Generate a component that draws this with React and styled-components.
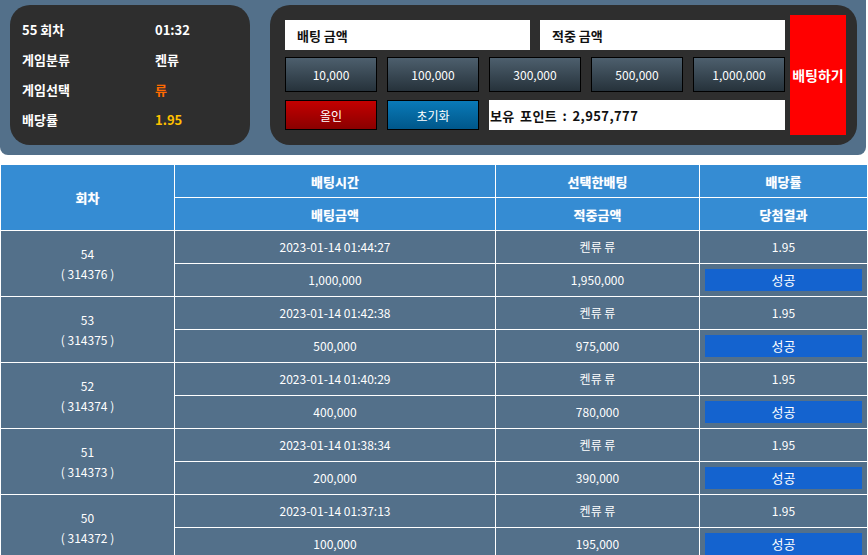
import React from 'react';
import styled, { createGlobalStyle } from 'styled-components';

const GlobalStyle = createGlobalStyle`
  html, body {
    margin: 0;
    padding: 0;
    background: #ffffff;
    overflow: hidden;
  }
  body {
    font-family: "Noto Sans CJK KR", "Noto Sans", sans-serif;
  }
`;

const TopBar = styled.div`
  width: 866px;
  height: 155px;
  box-sizing: border-box;
  background: #53708a;
  border-radius: 0 0 8px 8px;
  padding: 5px 9px 0 10px;
  display: flex;
  gap: 20px;
`;

const InfoPanel = styled.div`
  width: 240px;
  height: 140px;
  box-sizing: border-box;
  background: #2e2e2e;
  border-radius: 20px;
  padding: 9px 0 0 12px;
  display: grid;
  grid-template-columns: 133px 1fr;
  grid-auto-rows: 30px;
  align-items: center;
`;

const InfoText = styled.span`
  color: ${p => p.$color || '#ffffff'};
  font-size: 13px;
  font-weight: 700;
  line-height: 1;
`;

const BetPanel = styled.div`
  flex: 1;
  height: 140px;
  box-sizing: border-box;
  background: #2e2e2e;
  border-radius: 20px;
  padding: 10px 11px 10px 15px;
  display: flex;
  gap: 5px;
`;

const BetGrid = styled.div`
  width: 500px;
  padding-top: 5px;
  display: flex;
  flex-direction: column;
`;

const FieldRow = styled.div`
  display: flex;
  gap: 10px;
  margin-top: ${p => p.$top || 0}px;
`;

const AmountField = styled.div`
  flex: 1;
  height: 30px;
  background: #ffffff;
  display: flex;
  align-items: center;
  padding-left: ${p => (p.$tight ? 1 : 12)}px;
  color: #111111;
  font-size: 13px;
  font-weight: 700;
  letter-spacing: ${p => (p.$tight ? 0.4 : 0)}px;
  word-spacing: ${p => (p.$tight ? 2 : 0)}px;
  white-space: nowrap;
`;

const tones = {
  chip: ['#4d5f6d', '#26323b'],
  red: ['#c40000', '#8a0000'],
  blue: ['#0a7ab8', '#00578a'],
};

const ChipButton = styled.button`
  width: 92px;
  height: ${p => p.$h || 35}px;
  flex: none;
  box-sizing: border-box;
  border: 1px solid #000000;
  background: linear-gradient(${p => tones[p.$tone][0]}, ${p => tones[p.$tone][1]});
  color: #ffffff;
  font-family: inherit;
  font-size: 12px;
  font-weight: 400;
  padding: 0;
  cursor: pointer;
`;

const BetButton = styled.button`
  width: 56px;
  height: 120px;
  border: none;
  background: #ff0000;
  color: #ffffff;
  font-family: inherit;
  font-size: 14px;
  font-weight: 700;
  padding: 0;
  white-space: nowrap;
  cursor: pointer;
`;

const HistoryTable = styled.table`
  margin-top: 9px;
  width: 868px;
  border-collapse: collapse;
  table-layout: fixed;
  color: #ffffff;
`;

const Th = styled.th`
  background: #358cd3;
  border: 1px solid #ffffff;
  height: 32px;
  padding: 0;
  font-size: 13px;
  font-weight: 700;
  text-shadow: 0 0 1px rgba(255, 255, 255, 0.6);
`;

const Td = styled.td`
  background: #53708a;
  border: 1px solid #ffffff;
  height: 32px;
  padding: 0;
  text-align: center;
  font-size: 12px;
  font-weight: 400;
  line-height: 20px;
`;

const ResultBadge = styled.div`
  margin: 0 5px;
  height: 22px;
  background: #1463cf;
  display: flex;
  align-items: center;
  justify-content: center;
  font-size: 13px;
`;

const chips = ['10,000', '100,000', '300,000', '500,000', '1,000,000'];

const history = [
  { round: 54, id: 314376, time: '01:44:27', bet: '1,000,000', win: '1,950,000' },
  { round: 53, id: 314375, time: '01:42:38', bet: '500,000', win: '975,000' },
  { round: 52, id: 314374, time: '01:40:29', bet: '400,000', win: '780,000' },
  { round: 51, id: 314373, time: '01:38:34', bet: '200,000', win: '390,000' },
  { round: 50, id: 314372, time: '01:37:13', bet: '100,000', win: '195,000' },
];

export default function App() {
  return (
    <>
      <GlobalStyle />
      <TopBar>
        <InfoPanel>
          <InfoText>55 회차</InfoText>
          <InfoText>01:32</InfoText>
          <InfoText>게임분류</InfoText>
          <InfoText>켄류</InfoText>
          <InfoText>게임선택</InfoText>
          <InfoText $color="#ff6a00">류</InfoText>
          <InfoText>배당률</InfoText>
          <InfoText $color="#ffc000">1.95</InfoText>
        </InfoPanel>

        <BetPanel>
          <BetGrid>
            <FieldRow>
              <AmountField>배팅 금액</AmountField>
              <AmountField>적중 금액</AmountField>
            </FieldRow>
            <FieldRow $top={7}>
              {chips.map(c => (
                <ChipButton key={c} $tone="chip">{c}</ChipButton>
              ))}
            </FieldRow>
            <FieldRow $top={8}>
              <ChipButton $tone="red" $h={30}>올인</ChipButton>
              <ChipButton $tone="blue" $h={30}>초기화</ChipButton>
              <AmountField $tight>보유 포인트 : 2,957,777</AmountField>
            </FieldRow>
          </BetGrid>
          <BetButton>배팅하기</BetButton>
        </BetPanel>
      </TopBar>

      <HistoryTable>
        <colgroup>
          <col style={{ width: 174 }} />
          <col style={{ width: 321 }} />
          <col style={{ width: 204 }} />
          <col />
        </colgroup>
        <thead>
          <tr>
            <Th rowSpan={2}>회차</Th>
            <Th>배팅시간</Th>
            <Th>선택한배팅</Th>
            <Th>배당률</Th>
          </tr>
          <tr>
            <Th>배팅금액</Th>
            <Th>적중금액</Th>
            <Th>당첨결과</Th>
          </tr>
        </thead>
        <tbody>
          {history.map(h => (
            <React.Fragment key={h.round}>
              <tr>
                <Td rowSpan={2}>
                  {h.round}
                  <br />(&nbsp;{h.id}&nbsp;)
                </Td>
                <Td>2023-01-14 {h.time}</Td>
                <Td>켄류 류</Td>
                <Td>1.95</Td>
              </tr>
              <tr>
                <Td>{h.bet}</Td>
                <Td>{h.win}</Td>
                <Td>
                  <ResultBadge>성공</ResultBadge>
                </Td>
              </tr>
            </React.Fragment>
          ))}
        </tbody>
      </HistoryTable>
    </>
  );
}
